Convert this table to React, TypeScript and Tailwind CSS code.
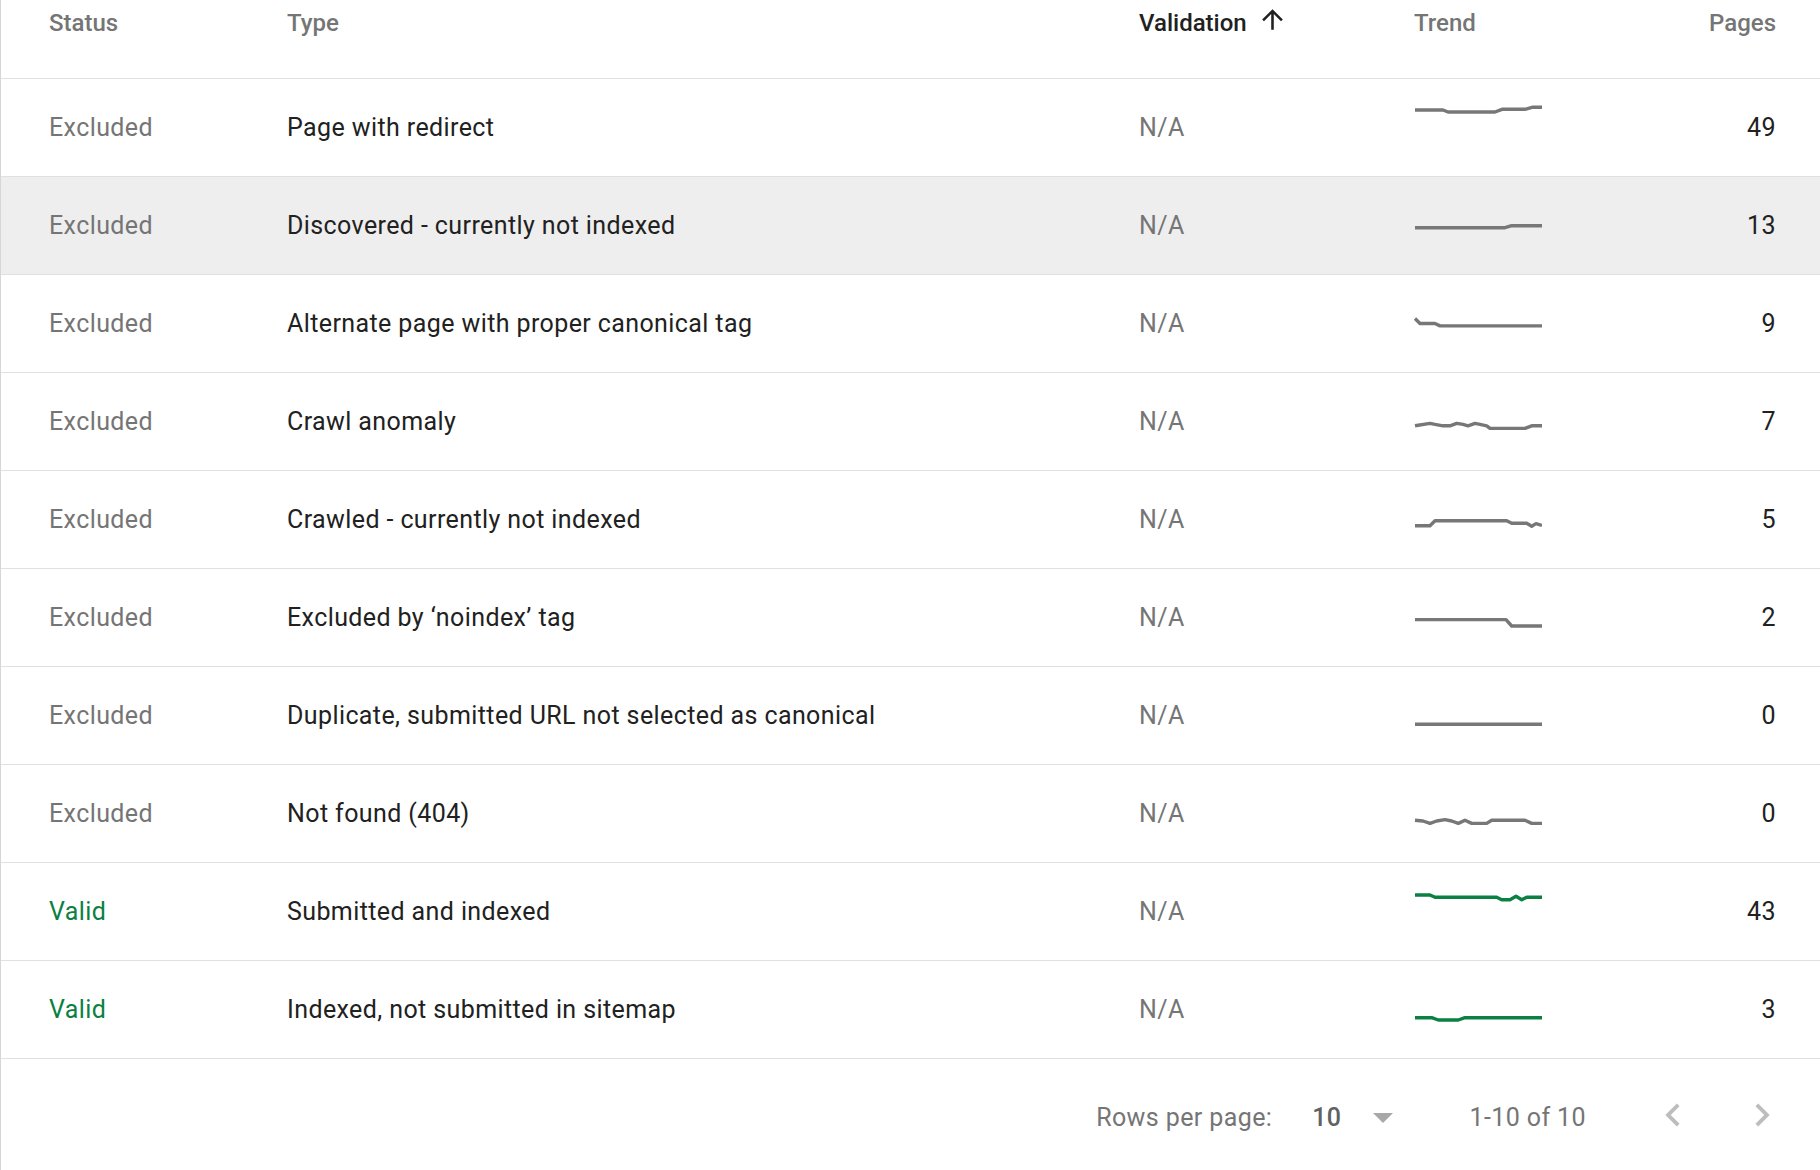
import React from 'react'

type Row = {
  status: 'Excluded' | 'Valid'
  type: string
  pages: number
  trend: [number, number][]
  hover?: boolean
}

// trend points: x from left of the 128px box, y relative to the row's middle
const rows: Row[] = [
  {
    status: 'Excluded',
    type: 'Page with redirect',
    pages: 49,
    trend: [[1, -18], [29, -18], [34, -16], [81, -16], [88, -18.7], [111, -18.7], [118, -20.7], [128, -20.7]],
  },
  {
    status: 'Excluded',
    type: 'Discovered - currently not indexed',
    pages: 13,
    hover: true,
    trend: [[1, 1.7], [91, 1.7], [97.7, -0.3], [128, -0.3]],
  },
  {
    status: 'Excluded',
    type: 'Alternate page with proper canonical tag',
    pages: 9,
    trend: [[1, -5.5], [6, -0.5], [21, -0.5], [26, 1.9], [128, 1.9]],
  },
  {
    status: 'Excluded',
    type: 'Crawl anomaly',
    pages: 7,
    trend: [
      [1, 3.8], [16, 1.4], [21, 2.4], [29, 3.8], [36, 3.8], [42.7, 1.4], [49, 2.4], [54, 3.8],
      [61, 1.4], [66, 2.4], [72.7, 3.8], [76, 6.4], [111, 6.4], [117.7, 3.8], [128, 3.8],
    ],
  },
  {
    status: 'Excluded',
    type: 'Crawled - currently not indexed',
    pages: 5,
    trend: [[1, 5.7], [16, 5.7], [21, 0.7], [92.7, 0.7], [97.7, 3.3], [112.7, 3.3], [117.7, 6.2], [122, 3.6], [128, 5.4]],
  },
  {
    status: 'Excluded',
    type: 'Excluded by \u2018noindex\u2019 tag',
    pages: 2,
    trend: [[1, 1.6], [92, 1.6], [97.7, 8], [128, 8]],
  },
  {
    status: 'Excluded',
    type: 'Duplicate, submitted URL not selected as canonical',
    pages: 0,
    trend: [[1, 8.3], [128, 8.3]],
  },
  {
    status: 'Excluded',
    type: 'Not found (404)',
    pages: 0,
    trend: [
      [1, 6.3], [9, 7], [16, 9.4], [22.7, 7], [31, 5.6], [37.7, 7], [44.3, 9.4], [51, 6.2],
      [57.7, 9.4], [72.7, 9.4], [77.7, 6.3], [111, 6.3], [117.7, 9.4], [128, 9.4],
    ],
  },
  {
    status: 'Valid',
    type: 'Submitted and indexed',
    pages: 43,
    trend: [[1, -17], [16, -17], [21, -14.7], [82.7, -14.7], [87.7, -12.3], [96, -12.3], [102, -15.7], [107.7, -12.3], [112.7, -14.7], [128, -14.7]],
  },
  {
    status: 'Valid',
    type: 'Indexed, not submitted in sitemap',
    pages: 3,
    trend: [[1, 7.7], [17.7, 7.7], [24.3, 10], [44.3, 10], [51, 7.7], [128, 7.7]],
  },
]

function Sparkline({ points, color }: { points: [number, number][]; color: string }) {
  const d = points.map(([x, y], i) => `${i === 0 ? 'M' : 'L'}${x} ${y + 24}`).join(' ')
  return (
    <svg width="128" height="48" viewBox="0 0 128 48" className="block">
      <path d={d} fill="none" stroke={color} strokeWidth="3.4" strokeLinejoin="round" />
    </svg>
  )
}

const cols = 'grid grid-cols-[238px_852px_275px_128px_1fr] pl-[48px] pr-[44px]'

export default function App() {
  return (
    <div className="min-h-[1170px] w-full bg-white font-['Roboto',sans-serif]">
      <div className="border-l border-[#d6d6d6]">
        {/* Header */}
        <div className={`${cols} h-[79px] border-b border-[#e0e0e0] pt-[9px] text-[24px] font-medium leading-[28px] text-[#757575]`}>
          <div>Status</div>
          <div>Type</div>
          <div className="flex items-start gap-[10px] text-[#212121]">
            <span>Validation</span>
            <svg width="31" height="31" viewBox="0 0 24 24" className="-mt-[5px]" fill="#212121">
              <path d="M4 12l1.41 1.41L11 7.83V20h2V7.83l5.58 5.59L20 12l-8-8-8 8z" />
            </svg>
          </div>
          <div>Trend</div>
          <div className="text-right">Pages</div>
        </div>

        {/* Rows */}
        {rows.map((r) => (
          <div
            key={r.type}
            className={`${cols} h-[98px] items-center border-b border-[#e0e0e0] text-[25px] tracking-[0.4px] ${r.hover ? 'bg-[#eeeeee]' : ''}`}
          >
            <div className={r.status === 'Valid' ? 'text-[#0b8043]' : 'text-[#757575]'}>{r.status}</div>
            <div className="text-[#212121]">{r.type}</div>
            <div className="text-[#757575]">N/A</div>
            <div>
              <Sparkline points={r.trend} color={r.status === 'Valid' ? '#0b8043' : '#777777'} />
            </div>
            <div className="text-right text-[#212121]">{r.pages}</div>
          </div>
        ))}

        {/* Footer */}
        <div className="flex h-[111px] items-center justify-end pr-[35px] text-[25px] tracking-[0.4px] text-[#757575]">
          <span className="mt-[7px]">Rows per page:</span>
          <span className="ml-[40px] mt-[7px] font-medium text-[#616161]">10</span>
          <svg width="20" height="10" viewBox="0 0 20 10" className="ml-[32px] mt-[6px]">
            <path d="M0 0h20L10 10z" fill="#a8a8a8" />
          </svg>
          <span className="ml-[76px] mt-[7px]">1-10 of 10</span>
          <svg width="46" height="46" viewBox="0 0 24 24" className="ml-[64px]" fill="#bdbdbd">
            <path d="M15.41 7.41L14 6l-6 6 6 6 1.41-1.41L10.83 12z" />
          </svg>
          <svg width="46" height="46" viewBox="0 0 24 24" className="ml-[43px]" fill="#bdbdbd">
            <path d="M8.59 16.59L10 18l6-6-6-6-1.41 1.41L13.17 12z" />
          </svg>
        </div>
      </div>
    </div>
  )
}
